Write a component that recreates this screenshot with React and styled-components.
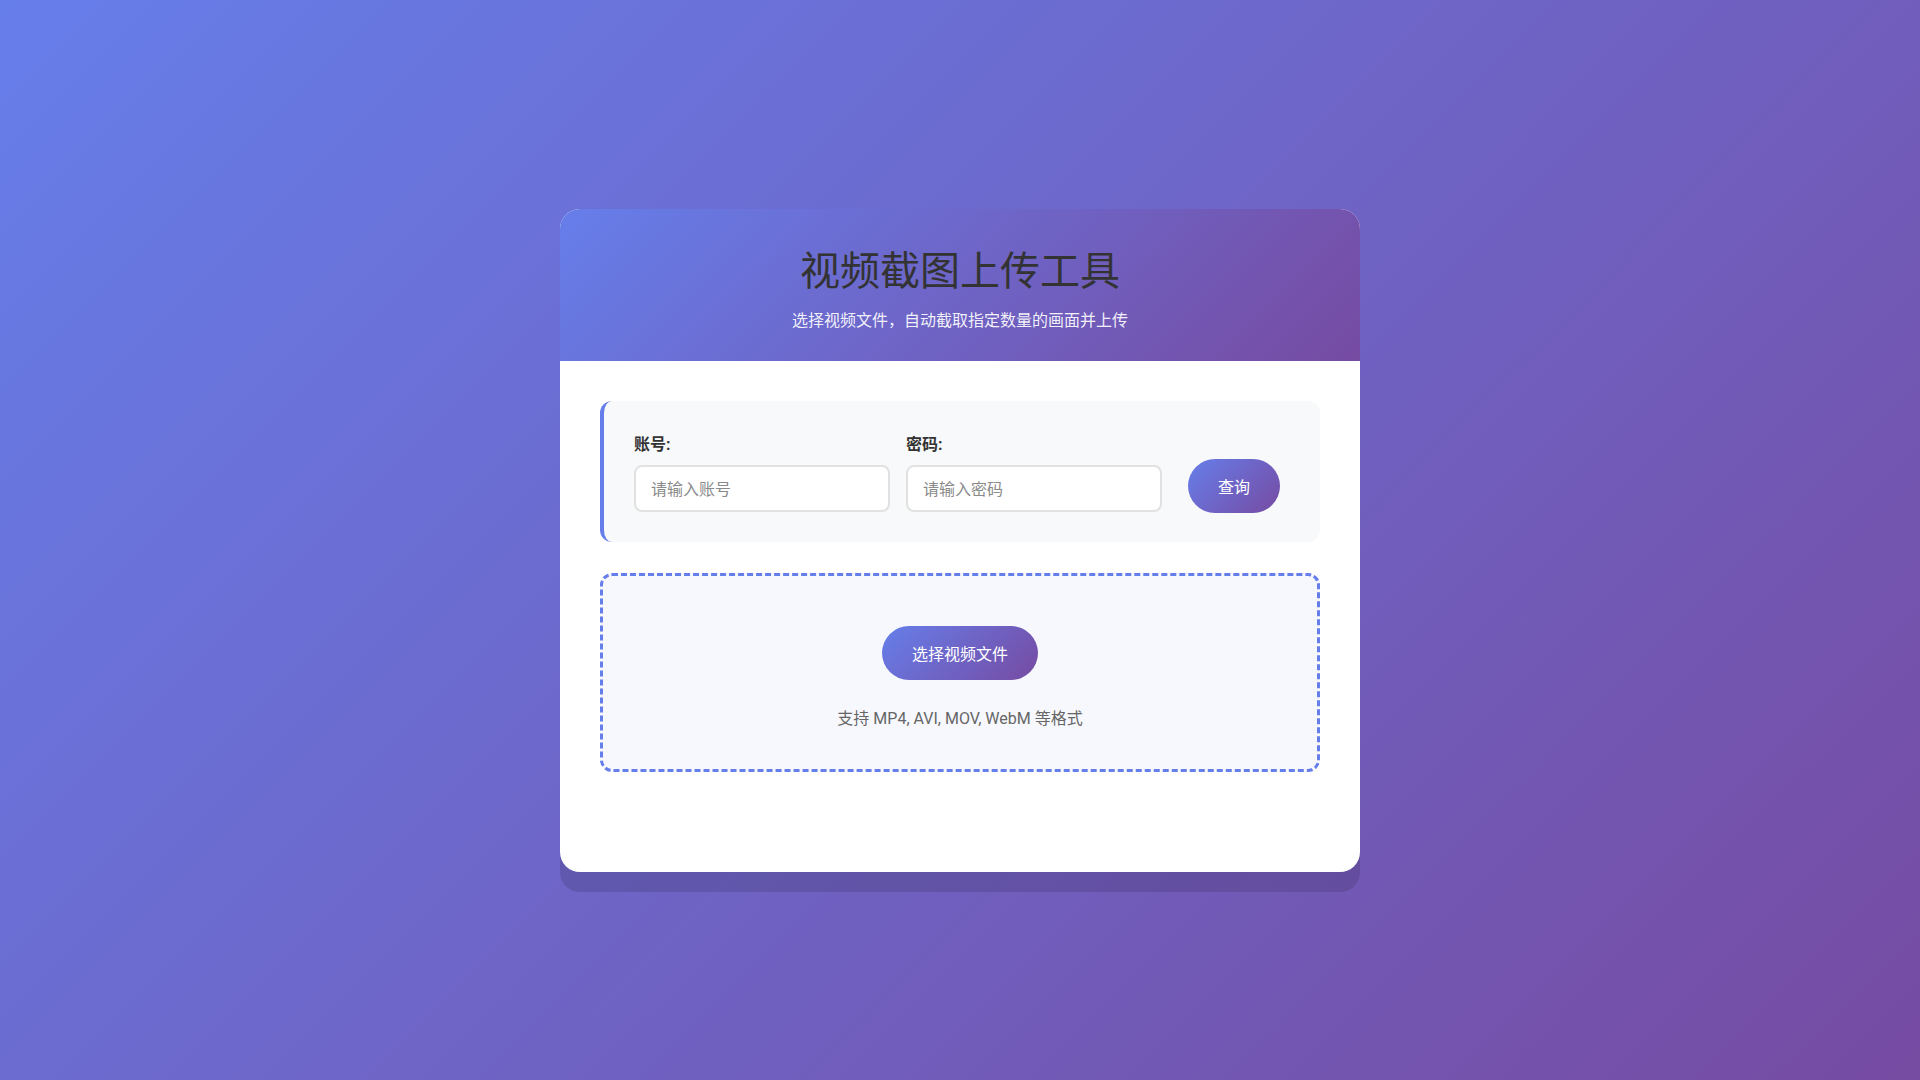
import React from "react";
import styled, { createGlobalStyle } from "styled-components";

const GlobalStyle = createGlobalStyle`
  * { box-sizing: border-box; }
  html, body { margin: 0; padding: 0; }
  body {
    font-family: Roboto, "Noto Sans CJK SC", sans-serif;
    background: linear-gradient(135deg, #667eea 0%, #764ba2 100%);
    min-height: 100vh;
  }
`;

const Page = styled.div`
  min-height: 100vh;
  display: flex;
  align-items: center;
  justify-content: center;
`;

const Card = styled.div`
  width: 800px;
  background: #ffffff;
  border-radius: 20px;
  overflow: hidden;
  box-shadow: 0 20px 0 0 rgba(0, 0, 0, 0.12);
`;

const Header = styled.div`
  background: linear-gradient(135deg, #667eea 0%, #764ba2 100%);
  padding: 39px 30px 28px;
  text-align: center;
`;

const Title = styled.h1`
  margin: 0 0 12px;
  font-size: 40px;
  line-height: 48px;
  font-weight: 400;
  color: #333333;
`;

const Subtitle = styled.p`
  margin: 0;
  font-size: 16px;
  line-height: 25px;
  color: rgba(255, 255, 255, 0.92);
`;

const Body = styled.div`
  padding: 40px 40px 100px;
`;

const AuthSection = styled.div`
  background: #f8f9fa;
  border-left: 4px solid #667eea;
  border-radius: 12px;
  padding: 33px 40px 30px 30px;
  margin-bottom: 31px;
  display: flex;
  align-items: flex-end;
`;

const Field = styled.div`
  width: 256px;
  display: flex;
  flex-direction: column;
  margin-right: ${(p) => p.$gap}px;
`;

const Label = styled.label`
  font-size: 16px;
  line-height: 22px;
  font-weight: 700;
  color: #333333;
  margin-bottom: 9px;
`;

const Input = styled.input`
  height: 47px;
  border: 2px solid #e1e1e1;
  border-radius: 8px;
  padding: 2px 15px 0;
  font-family: Roboto, "Noto Sans CJK SC", sans-serif;
  font-size: 16px;
  color: #333;
  background: #fff;
  outline: none;
  &::placeholder { color: #8a8a8a; }
`;

const GradientButton = styled.button`
  border: none;
  border-radius: 30px;
  height: 54px;
  padding: 0 30px;
  font-family: Roboto, "Noto Sans CJK SC", sans-serif;
  font-size: 16px;
  color: #ffffff;
  background: linear-gradient(135deg, #667eea 0%, #764ba2 100%);
  cursor: pointer;
  margin-bottom: ${(p) => p.$mb || 0}px;
`;

const UploadArea = styled.div`
  border: 3px dashed #667eea;
  border-radius: 12px;
  background: #f7f8fd;
  padding: 50px 20px 39px;
  display: flex;
  flex-direction: column;
  align-items: center;
`;

const SupportText = styled.p`
  margin: 28px 0 0;
  font-size: 16px;
  line-height: 22px;
  color: #666666;
`;

export default function App() {
  return (
    <>
      <GlobalStyle />
      <Page>
        <Card>
          <Header>
            <Title>视频截图上传工具</Title>
            <Subtitle>选择视频文件，自动截取指定数量的画面并上传</Subtitle>
          </Header>
          <Body>
            <AuthSection>
              <Field $gap={16}>
                <Label>账号:</Label>
                <Input placeholder="请输入账号" />
              </Field>
              <Field $gap={26}>
                <Label>密码:</Label>
                <Input type="password" placeholder="请输入密码" />
              </Field>
              <GradientButton $mb={-1}>查询</GradientButton>
            </AuthSection>
            <UploadArea>
              <GradientButton>选择视频文件</GradientButton>
              <SupportText>支持 MP4, AVI, MOV, WebM 等格式</SupportText>
            </UploadArea>
          </Body>
        </Card>
      </Page>
    </>
  );
}
